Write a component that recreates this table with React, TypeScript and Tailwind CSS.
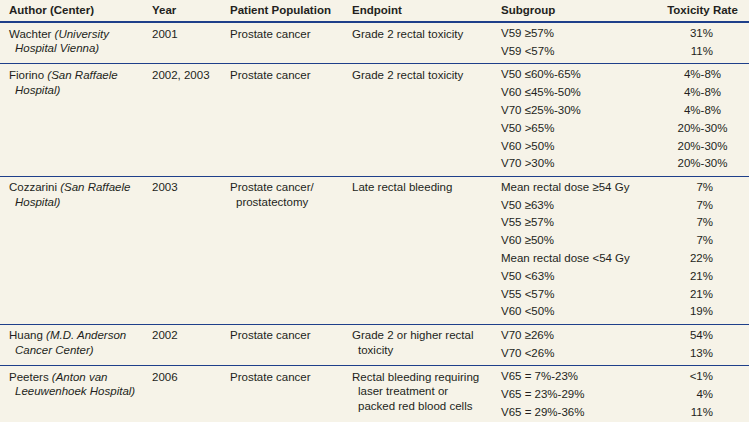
import React from "react"

type Group = {
  author: string
  center: string
  year: string
  population: string
  endpoint: string
  rows: [string, string][]
}

const groups: Group[] = [
  {
    author: "Wachter",
    center: "(University Hospital Vienna)",
    year: "2001",
    population: "Prostate cancer",
    endpoint: "Grade 2 rectal toxicity",
    rows: [
      ["V59 ≥57%", "31%"],
      ["V59 <57%", "11%"],
    ],
  },
  {
    author: "Fiorino",
    center: "(San Raffaele Hospital)",
    year: "2002, 2003",
    population: "Prostate cancer",
    endpoint: "Grade 2 rectal toxicity",
    rows: [
      ["V50 ≤60%-65%", "4%-8%"],
      ["V60 ≤45%-50%", "4%-8%"],
      ["V70 ≤25%-30%", "4%-8%"],
      ["V50 >65%", "20%-30%"],
      ["V60 >50%", "20%-30%"],
      ["V70 >30%", "20%-30%"],
    ],
  },
  {
    author: "Cozzarini",
    center: "(San Raffaele Hospital)",
    year: "2003",
    population: "Prostate cancer/ prostatectomy",
    endpoint: "Late rectal bleeding",
    rows: [
      ["Mean rectal dose ≥54 Gy", "7%"],
      ["V50 ≥63%", "7%"],
      ["V55 ≥57%", "7%"],
      ["V60 ≥50%", "7%"],
      ["Mean rectal dose <54 Gy", "22%"],
      ["V50 <63%", "21%"],
      ["V55 <57%", "21%"],
      ["V60 <50%", "19%"],
    ],
  },
  {
    author: "Huang",
    center: "(M.D. Anderson Cancer Center)",
    year: "2002",
    population: "Prostate cancer",
    endpoint: "Grade 2 or higher rectal toxicity",
    rows: [
      ["V70 ≥26%", "54%"],
      ["V70 <26%", "13%"],
    ],
  },
  {
    author: "Peeters",
    center: "(Anton van Leeuwenhoek Hospital)",
    year: "2006",
    population: "Prostate cancer",
    endpoint: "Rectal bleeding requiring laser treatment or packed red blood cells",
    rows: [
      ["V65 = 7%-23%", "<1%"],
      ["V65 = 23%-29%", "4%"],
      ["V65 = 29%-36%", "11%"],
    ],
  },
]

const cols = "grid grid-cols-[152px_78px_122px_149px_155px_93px]"
// wrapped cells: hanging indent, slightly tighter leading than the sub-rows
const wrap = "pt-[1.6px] pl-[6px] indent-[-6px] leading-[14.6px]"

export default function App() {
  return (
    <div
      className="w-[749px] h-[422px] overflow-hidden bg-[#f6f3e8] text-[#231f20] text-[11.5px]"
      style={{ fontFamily: '"Liberation Sans", Arial, sans-serif' }}
    >
      {/* Header */}
      <div className={`${cols} h-[23px] pt-[2px] font-bold leading-[17.8px] border-b-2 border-[#1e3f8a]`}>
        <div className="pl-[9px]">Author (Center)</div>
        <div>Year</div>
        <div>Patient Population</div>
        <div>Endpoint</div>
        <div>Subgroup</div>
        <div className="text-center">Toxicity Rate</div>
      </div>

      {groups.map((g, i) => (
        <div
          key={g.author}
          className={`${cols} py-[2.3px] ${i > 0 ? "border-t border-[#1e3f8a]" : ""}`}
        >
          <div className="pl-[9px]">
            <div className={`${wrap} w-[138px]`}>
              {g.author} <i>{g.center}</i>
            </div>
          </div>
          <div className="pt-[1.6px] leading-[14.6px]">{g.year}</div>
          <div className={`${wrap} w-[116px]`}>{g.population}</div>
          <div className={`${wrap} w-[131px]`}>{g.endpoint}</div>
          <div className="col-span-2 flex flex-col">
            {g.rows.map(([sub, rate], j) => (
              <div key={j} className="grid grid-cols-[155px_93px] leading-[17.8px]">
                <div>{sub}</div>
                {/* ranges sit centred, single values line up on the right */}
                <div className={rate.includes("-") ? "text-center" : "text-right pr-[36px]"}>{rate}</div>
              </div>
            ))}
          </div>
        </div>
      ))}
    </div>
  )
}
